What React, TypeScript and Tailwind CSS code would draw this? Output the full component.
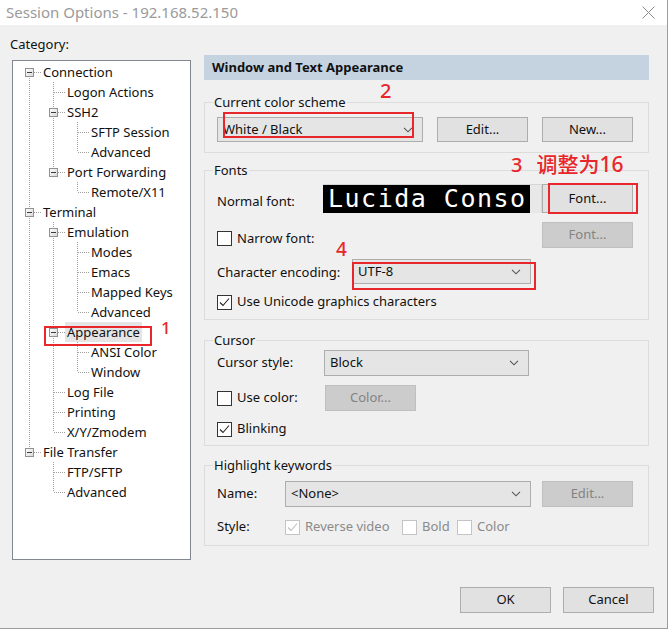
import React from "react";

type TreeNode = { label: string; children?: TreeNode[]; selected?: boolean };

type Row = {
  label: string;
  hasChildren: boolean;
  isFirstRoot: boolean;
  hasNext: boolean;
  ancestors: boolean[];
  selected?: boolean;
};

const tree: TreeNode[] = [
  {
    label: "Connection",
    children: [
      { label: "Logon Actions" },
      { label: "SSH2", children: [{ label: "SFTP Session" }, { label: "Advanced" }] },
      { label: "Port Forwarding", children: [{ label: "Remote/X11" }] },
    ],
  },
  {
    label: "Terminal",
    children: [
      {
        label: "Emulation",
        children: [{ label: "Modes" }, { label: "Emacs" }, { label: "Mapped Keys" }, { label: "Advanced" }],
      },
      { label: "Appearance", selected: true, children: [{ label: "ANSI Color" }, { label: "Window" }] },
      { label: "Log File" },
      { label: "Printing" },
      { label: "X/Y/Zmodem" },
    ],
  },
  { label: "File Transfer", children: [{ label: "FTP/SFTP" }, { label: "Advanced" }] },
];

function flatten(nodes: TreeNode[], level: number, ancestors: boolean[], out: Row[]) {
  nodes.forEach((n, i) => {
    const hasNext = i < nodes.length - 1;
    out.push({
      label: n.label,
      hasChildren: !!n.children,
      isFirstRoot: level === 0 && i === 0,
      hasNext,
      ancestors,
      selected: n.selected,
    });
    if (n.children) flatten(n.children, level + 1, [...ancestors, hasNext], out);
  });
  return out;
}

const rows = flatten(tree, 0, [], []);

const DOT = "#a0a0a0";

function AncestorCell({ cont }: { cont: boolean }) {
  return (
    <svg width="24" height="20" className="shrink-0" shapeRendering="crispEdges">
      {cont && <line x1="12.5" y1="0" x2="12.5" y2="20" stroke={DOT} strokeDasharray="1 1" />}
    </svg>
  );
}

function OwnCell({ row }: { row: Row }) {
  return (
    <svg width="24" height="20" className="shrink-0" shapeRendering="crispEdges">
      <defs>
        <linearGradient id="exp" x1="0" y1="0" x2="1" y2="1">
          <stop offset="0" stopColor="#ffffff" />
          <stop offset="1" stopColor="#d8d8d8" />
        </linearGradient>
      </defs>
      {!row.isFirstRoot && <line x1="12.5" y1="0" x2="12.5" y2="10" stroke={DOT} strokeDasharray="1 1" />}
      {row.hasNext && <line x1="12.5" y1="10" x2="12.5" y2="20" stroke={DOT} strokeDasharray="1 1" />}
      <line x1={row.hasChildren ? 17 : 13} y1="10.5" x2="24" y2="10.5" stroke={DOT} strokeDasharray="1 1" />
      {row.hasChildren && (
        <>
          <rect x="8.5" y="6.5" width="8" height="8" fill="url(#exp)" stroke="#919191" />
          <line x1="10" y1="10.5" x2="15" y2="10.5" stroke="#3c3c3c" />
        </>
      )}
    </svg>
  );
}

function Checkbox({ checked, disabled }: { checked?: boolean; disabled?: boolean }) {
  return (
    <div
      className={`w-[15px] h-[15px] shrink-0 bg-white border ${
        disabled ? "border-[#c4c4c4]" : "border-[#333333]"
      } flex items-center justify-center`}
    >
      {checked && (
        <svg width="13" height="13" viewBox="0 0 13 13">
          <path d="M2 6.5 L5 9.5 L11 2.5" fill="none" stroke={disabled ? "#bdbdbd" : "#222222"} strokeWidth="1.1" />
        </svg>
      )}
    </div>
  );
}

function Chevron() {
  return (
    <svg width="10" height="6" viewBox="0 0 10 6">
      <path d="M1 0.8 L5 4.8 L9 0.8" fill="none" stroke="#555555" strokeWidth="1.1" />
    </svg>
  );
}

function Combo({ value, className }: { value: string; className: string }) {
  return (
    <div
      className={`h-[25px] border border-[#adadad] bg-[#e5e5e5] flex items-center justify-between pl-[5px] pr-[9px] ${className}`}
    >
      <span>{value}</span>
      <Chevron />
    </div>
  );
}

function Button({ label, disabled, className = "" }: { label: string; disabled?: boolean; className?: string }) {
  return (
    <div
      className={`w-[91px] border flex items-center justify-center shrink-0 ${
        disabled ? "bg-[#cccccc] border-[#bfbfbf] text-[#838383]" : "bg-[#e1e1e1] border-[#adadad]"
      } ${className}`}
    >
      {label}
    </div>
  );
}

function Group({ title, className, children }: { title: string; className: string; children: React.ReactNode }) {
  return (
    <div className={`border border-[#dcdcdc] ${className}`}>
      <div className="-mt-[9px] ml-[8px] px-[1px] w-fit bg-[#f0f0f0] h-[16px] leading-[16px]">{title}</div>
      {children}
    </div>
  );
}

export default function App() {
  return (
    <div className="w-[672px] h-[637px] bg-white relative font-['Noto_Sans',sans-serif] text-[13px] text-[#111]">
      <div className="w-[668px] h-[629px] flex flex-col bg-[#f0f0f0] border-r border-b border-[#9d9d9d]">
        {/* title bar */}
        <div className="h-[25px] bg-white flex items-center justify-between pl-[6px] pr-[12px] shrink-0">
          <span className="text-[15px] text-[#9a9a9a]">Session Options - 192.168.52.150</span>
          <svg width="13" height="13" viewBox="0 0 13 13">
            <path d="M0.5 0.5 L12.5 12.5 M12.5 0.5 L0.5 12.5" stroke="#8a8a8a" strokeWidth="1" />
          </svg>
        </div>

        <div className="flex">
          {/* category tree */}
          <div className="w-[204px] pl-[10px] pt-[10px]">
            <div className="h-[18px] leading-[18px]">Category:</div>
            <div className="mt-[7px] ml-[2px] w-[179px] h-[500px] border border-[#828790] bg-white pl-[4px] pt-[1px]">
              {rows.map((row, i) => (
                <div key={i} className="flex h-[20px] items-center">
                  {row.ancestors.map((c, j) => (
                    <AncestorCell key={j} cont={c} />
                  ))}
                  <OwnCell row={row} />
                  <span
                    className={`px-[2px] h-[20px] leading-[20px] whitespace-nowrap ${
                      row.selected ? "bg-[#e5e5e5]" : ""
                    }`}
                  >
                    {row.label}
                  </span>
                </div>
              ))}
            </div>
          </div>

          {/* settings */}
          <div className="w-[445px] pt-[30px]">
            <div className="h-[25px] bg-[#c5d3e0] flex items-center pl-[8px] font-bold">Window and Text Appearance</div>

            <Group title="Current color scheme" className="mt-[22px] pb-[10px]">
              <div className="flex mt-[7px] pl-[12px] h-[25px]">
                <Combo value="White / Black" className="w-[206px]" />
                <Button label="Edit..." className="ml-[14px]" />
                <Button label="New..." className="ml-[14px]" />
              </div>
            </Group>

            <Group title="Fonts" className="mt-[17px] pb-[9px]">
              <div className="flex items-center mt-[6px] pl-[12px] h-[29px]">
                <span className="w-[106px] mt-[6px]">Normal font:</span>
                <div className="w-[219px] h-[29px] border-t border-r border-[#d6d6d6] bg-[#e8e8e8] flex">
                  <div className="w-[207px] h-full bg-black overflow-hidden pl-[5px] font-['DejaVu_Sans_Mono',monospace] text-[25px] tracking-[1.5px] text-white leading-[28px] whitespace-nowrap">
                    Lucida Conso
                  </div>
                </div>
                <Button label="Font..." className="h-[29px]" />
              </div>
              <div className="flex items-end mt-[9px] pl-[12px] pr-[15px] h-[26px]">
                <div className="flex items-center">
                  <Checkbox />
                  <span className="ml-[5px]">Narrow font:</span>
                </div>
                <Button label="Font..." disabled className="ml-auto h-[26px]" />
              </div>
              <div className="flex items-center mt-[11px] pl-[12px] h-[25px]">
                <span className="w-[135px] mt-[2px]">Character encoding:</span>
                <Combo value="UTF-8" className="w-[179px]" />
              </div>
              <div className="flex items-center mt-[10px] pl-[12px] h-[16px]">
                <Checkbox checked />
                <span className="ml-[5px]">Use Unicode graphics characters</span>
              </div>
            </Group>

            <Group title="Cursor" className="mt-[20px] pb-[8px]">
              <div className="flex items-center mt-[2px] pl-[12px] h-[26px]">
                <span className="w-[107px]">Cursor style:</span>
                <Combo value="Block" className="w-[205px] h-[26px]" />
              </div>
              <div className="flex items-center mt-[9px] pl-[12px] h-[26px]">
                <div className="flex items-center w-[108px]">
                  <Checkbox />
                  <span className="ml-[5px]">Use color:</span>
                </div>
                <Button label="Color..." disabled className="h-[26px]" />
              </div>
              <div className="flex items-center mt-[10px] pl-[12px] h-[16px]">
                <Checkbox checked />
                <span className="ml-[5px]">Blinking</span>
              </div>
            </Group>

            <Group title="Highlight keywords" className="mt-[19px] pb-[10px]">
              <div className="flex items-center mt-[8px] pl-[12px] pr-[15px] h-[26px]">
                <span className="w-[68px]">Name:</span>
                <Combo value="<None>" className="w-[246px] h-[26px]" />
                <Button label="Edit..." disabled className="ml-auto h-[26px]" />
              </div>
              <div className="flex items-center mt-[12px] pl-[12px] h-[16px]">
                <span className="w-[68px]">Style:</span>
                <div className="flex items-center w-[117px]">
                  <Checkbox checked disabled />
                  <span className="ml-[5px] text-[#8a8a8a]">Reverse video</span>
                </div>
                <div className="flex items-center w-[55px]">
                  <Checkbox disabled />
                  <span className="ml-[5px] text-[#8a8a8a]">Bold</span>
                </div>
                <div className="flex items-center">
                  <Checkbox disabled />
                  <span className="ml-[5px] text-[#8a8a8a]">Color</span>
                </div>
              </div>
            </Group>
          </div>
        </div>

        <div className="flex justify-end mt-[27px] pr-[13px]">
          <Button label="OK" className="h-[26px]" />
          <Button label="Cancel" className="h-[26px] ml-[12px]" />
        </div>
      </div>

      {/* red annotations */}
      <div className="absolute left-[44px] top-[326px] w-[108px] h-[20px] border-2 border-[#e8262b]" />
      <div className="absolute left-[161px] top-[318px] h-[20px] leading-[20px] text-[17px] font-medium text-[#e8262b]">1</div>
      <div className="absolute left-[380px] top-[81px] h-[20px] leading-[20px] text-[20px] font-medium text-[#e8262b]">2</div>
      <div className="absolute left-[223px] top-[112px] w-[191px] h-[26px] border-2 border-[#e8262b]" />
      <div className="absolute left-[511px] top-[153px] h-[22px] leading-[22px] text-[20px] font-medium text-[#e8262b] whitespace-nowrap font-['Noto_Sans','Noto_Sans_CJK_SC',sans-serif]">
        <span>3</span>
        <span className="ml-[14px] text-[21px]">调整为16</span>
      </div>
      <div className="absolute left-[548px] top-[183px] w-[90px] h-[31px] border-2 border-[#e8262b]" />
      <div className="absolute left-[336px] top-[239px] h-[20px] leading-[20px] text-[19px] font-medium text-[#e8262b]">4</div>
      <div className="absolute left-[352px] top-[262px] w-[184px] h-[28px] border-2 border-[#e8262b]" />
    </div>
  );
}
